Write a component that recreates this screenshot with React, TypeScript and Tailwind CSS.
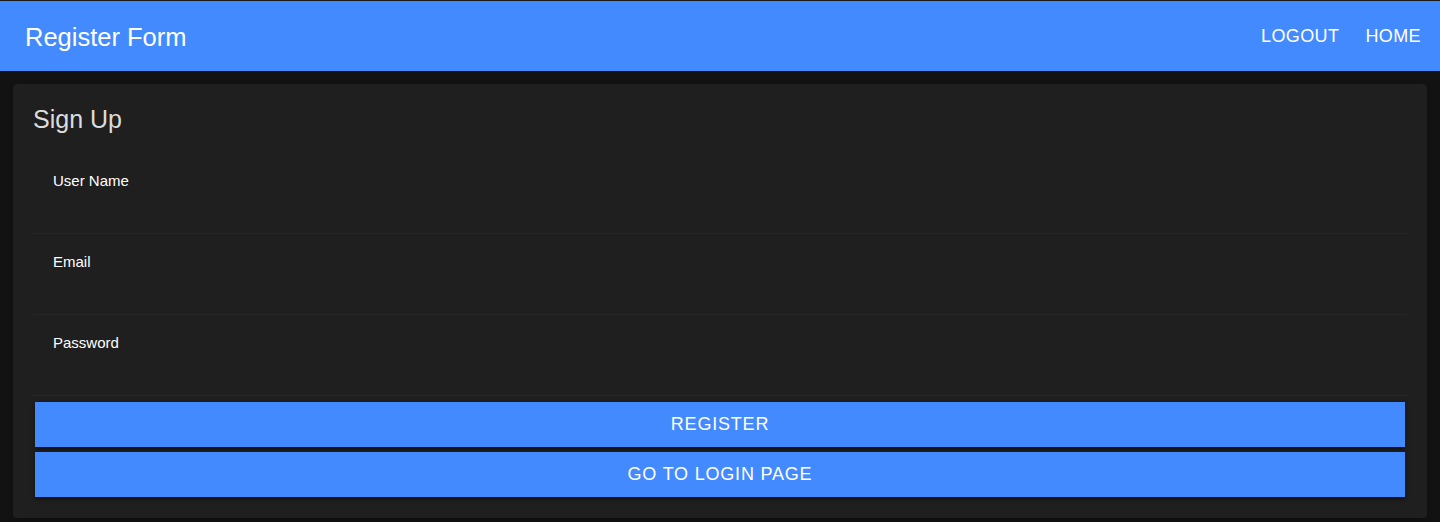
export default function App() {
  const fields = ["User Name", "Email", "Password"];

  return (
    <div className="min-h-[522px] bg-[#121212] font-['Liberation_Sans',Arial,sans-serif] border-t border-[#1a1a1a]">
      {/* Header */}
      <header className="flex h-[70px] items-center justify-between bg-[#448aff] pl-[25px] pr-[19px] text-white">
        <h1 className="pt-[3px] text-[25.5px] leading-none">Register Form</h1>
        <nav className="flex items-center gap-[26px] text-[18px] tracking-[0.4px]">
          <a>LOGOUT</a>
          <a>HOME</a>
        </nav>
      </header>

      {/* Card */}
      <main className="px-[13px] pt-[13px] pb-[3px]">
        <div className="rounded-[4px] bg-[#1f1f1f] px-[20px] pb-[21px] shadow-md">
          <h2 className="pt-[23px] pb-[22px] text-[25px] leading-[24px] text-[#dcdcdc]">
            Sign Up
          </h2>

          <div>
            {fields.map((label) => (
              <div
                key={label}
                className="h-[81px] border-b border-[#262626] pl-[20px] pt-[17px] text-[15px] text-white"
              >
                {label}
              </div>
            ))}
          </div>

          <div className="mt-[6px] flex flex-col gap-[5px] px-[2px]">
            <button className="h-[45px] w-full bg-[#448aff] text-[18px] tracking-[0.8px] text-white shadow-[0_2px_4px_rgba(0,0,0,0.5)]">
              REGISTER
            </button>
            <button className="h-[45px] w-full bg-[#448aff] text-[18px] tracking-[0.8px] text-white shadow-[0_2px_4px_rgba(0,0,0,0.5)]">
              GO TO LOGIN PAGE
            </button>
          </div>
        </div>
      </main>
    </div>
  );
}
